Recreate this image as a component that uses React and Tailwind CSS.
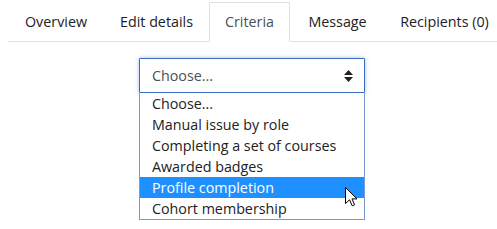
import React from 'react';

const tabs = [
    { label: 'Overview', w: 'w-[96px]' },
    { label: 'Edit details', w: 'w-[105px]' },
    { label: 'Criteria', w: 'w-[81px]', active: true },
    { label: 'Message', w: 'w-[95px]' },
    { label: 'Recipients (0)', w: 'w-[119px]' },
];

const options = [
    'Choose...',
    'Manual issue by role',
    'Completing a set of courses',
    'Awarded badges',
    'Profile completion',
    'Cohort membership',
];

const Cursor = () => (
    <svg width="13" height="20" viewBox="0 0 13 20" className="absolute left-[345px] top-[187px]">
        <path
            d="M0.5 0.5 L0.5 16.5 L4.5 12.8 L7.2 18.8 L9.6 17.8 L7 11.9 L12 11.9 Z"
            fill="#fff"
            stroke="#000"
            strokeWidth="1"
            strokeLinejoin="miter"
        />
    </svg>
);

const App = () => {
    return (
        <div
            className="relative w-[497px] h-[229px] bg-white overflow-hidden text-[14.3px]"
            style={{ fontFamily: '"Open Sans", "Noto Sans", sans-serif' }}
        >
            {/* tab bar */}
            <div className="ml-[8px] pt-[2px] flex border-b border-[#dee2e6] whitespace-nowrap">
                {tabs.map((t) => (
                    <div
                        key={t.label}
                        className={`${t.w} shrink-0 h-[40px] flex items-center justify-center -mb-px ${
                            t.active
                                ? 'border border-[#dee2e6] border-b-white bg-white text-[#495057]'
                                : 'border border-transparent text-[#1d2125]'
                        }`}
                    >
                        {t.label}
                    </div>
                ))}
            </div>

            {/* select */}
            <div className="ml-[139px] mt-[16px] w-[226px]">
                <div className="h-[35px] flex items-center justify-between pl-[12px] pr-[11px] border border-[#3b6cc2] rounded-[1px] shadow-[0_0_4px_rgba(59,108,194,0.45)] text-[#495057]">
                    <span>Choose...</span>
                    <svg width="9" height="12" viewBox="0 0 9 12">
                        <path d="M4.5 0 L9 5 L0 5 Z M4.5 12 L9 7 L0 7 Z" fill="#222" />
                    </svg>
                </div>
                <div className="border border-t-0 border-[#7a9ad4] bg-white">
                    {options.map((o) => (
                        <div
                            key={o}
                            className={`h-[21px] leading-[21px] pl-[12px] ${
                                o === 'Profile completion' ? 'bg-[#1e90ff] text-white' : 'text-[#222]'
                            }`}
                        >
                            {o}
                        </div>
                    ))}
                </div>
            </div>

            <Cursor />
        </div>
    );
};

export default App;
